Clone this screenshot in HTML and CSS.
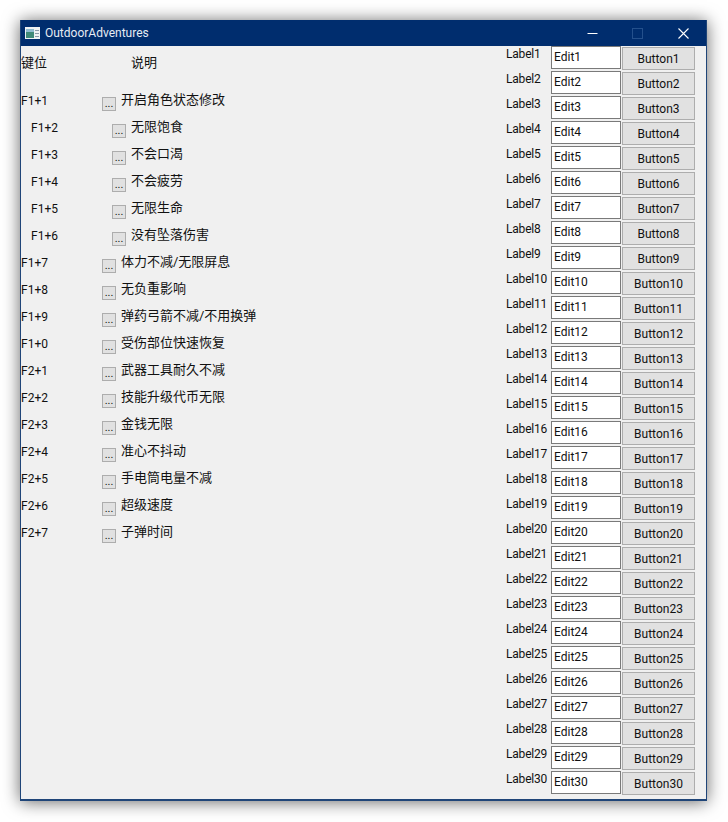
FILE: index.html
```html
<!DOCTYPE html>
<html lang="zh-CN">

<head>
    <meta charset="UTF-8">
    <title>OutdoorAdventures</title>
    <link rel="stylesheet" href="styles.css">
</head>

<body>
    <div class="window">
        <div class="titlebar">
            <svg class="app-icon" width="15" height="12" viewBox="0 0 15 12">
                <rect x="0" y="0" width="15" height="12" fill="#eef2f4" />
                <rect x="1" y="2" width="8" height="9" fill="#3f8a78" />
                <rect x="1" y="2" width="8" height="3" fill="#8fbcd0" />
                <rect x="10" y="3" width="4" height="1" fill="#8a9aa8" />
                <rect x="10" y="6" width="4" height="1" fill="#8a9aa8" />
                <rect x="10" y="9" width="4" height="1" fill="#8a9aa8" />
            </svg>
            <span class="title">OutdoorAdventures</span>
            <div class="controls">
                <svg class="ctl ctl-min" width="11" height="11" viewBox="0 0 11 11">
                    <path d="M0.5 5.5H10.5" stroke="#fff" stroke-width="1" fill="none" />
                </svg>
                <svg class="ctl ctl-max" width="11" height="11" viewBox="0 0 11 11">
                    <rect x="0.5" y="0.5" width="10" height="10" stroke="#24508c" fill="none" />
                </svg>
                <svg class="ctl ctl-close" width="11" height="11" viewBox="0 0 11 11">
                    <path d="M0.5 0.5L10.5 10.5M10.5 0.5L0.5 10.5" stroke="#fff" stroke-width="1.1" fill="none" />
                </svg>
            </div>
        </div>

        <div class="content">
            <div class="hotkeys">
                <div class="head">
                    <span class="key">键位</span>
                    <span class="head-desc">说明</span>
                </div>
                <div class="row"><span class="key">F1+1</span><button class="dots">...</button><span class="desc">开启角色状态修改</span></div>
                <div class="row sub"><span class="key">F1+2</span><button class="dots">...</button><span class="desc">无限饱食</span></div>
                <div class="row sub"><span class="key">F1+3</span><button class="dots">...</button><span class="desc">不会口渴</span></div>
                <div class="row sub"><span class="key">F1+4</span><button class="dots">...</button><span class="desc">不会疲劳</span></div>
                <div class="row sub"><span class="key">F1+5</span><button class="dots">...</button><span class="desc">无限生命</span></div>
                <div class="row sub"><span class="key">F1+6</span><button class="dots">...</button><span class="desc">没有坠落伤害</span></div>
                <div class="row"><span class="key">F1+7</span><button class="dots">...</button><span class="desc">体力不减/无限屏息</span></div>
                <div class="row"><span class="key">F1+8</span><button class="dots">...</button><span class="desc">无负重影响</span></div>
                <div class="row"><span class="key">F1+9</span><button class="dots">...</button><span class="desc">弹药弓箭不减/不用换弹</span></div>
                <div class="row"><span class="key">F1+0</span><button class="dots">...</button><span class="desc">受伤部位快速恢复</span></div>
                <div class="row"><span class="key">F2+1</span><button class="dots">...</button><span class="desc">武器工具耐久不减</span></div>
                <div class="row"><span class="key">F2+2</span><button class="dots">...</button><span class="desc">技能升级代币无限</span></div>
                <div class="row"><span class="key">F2+3</span><button class="dots">...</button><span class="desc">金钱无限</span></div>
                <div class="row"><span class="key">F2+4</span><button class="dots">...</button><span class="desc">准心不抖动</span></div>
                <div class="row"><span class="key">F2+5</span><button class="dots">...</button><span class="desc">手电筒电量不减</span></div>
                <div class="row"><span class="key">F2+6</span><button class="dots">...</button><span class="desc">超级速度</span></div>
                <div class="row"><span class="key">F2+7</span><button class="dots">...</button><span class="desc">子弹时间</span></div>
            </div>

            <div class="fields">
                <div class="field"><span class="lbl">Label1</span><input class="edit" value="Edit1"><button class="btn">Button1</button></div>
                <div class="field"><span class="lbl">Label2</span><input class="edit" value="Edit2"><button class="btn">Button2</button></div>
                <div class="field"><span class="lbl">Label3</span><input class="edit" value="Edit3"><button class="btn">Button3</button></div>
                <div class="field"><span class="lbl">Label4</span><input class="edit" value="Edit4"><button class="btn">Button4</button></div>
                <div class="field"><span class="lbl">Label5</span><input class="edit" value="Edit5"><button class="btn">Button5</button></div>
                <div class="field"><span class="lbl">Label6</span><input class="edit" value="Edit6"><button class="btn">Button6</button></div>
                <div class="field"><span class="lbl">Label7</span><input class="edit" value="Edit7"><button class="btn">Button7</button></div>
                <div class="field"><span class="lbl">Label8</span><input class="edit" value="Edit8"><button class="btn">Button8</button></div>
                <div class="field"><span class="lbl">Label9</span><input class="edit" value="Edit9"><button class="btn">Button9</button></div>
                <div class="field"><span class="lbl">Label10</span><input class="edit" value="Edit10"><button class="btn">Button10</button></div>
                <div class="field"><span class="lbl">Label11</span><input class="edit" value="Edit11"><button class="btn">Button11</button></div>
                <div class="field"><span class="lbl">Label12</span><input class="edit" value="Edit12"><button class="btn">Button12</button></div>
                <div class="field"><span class="lbl">Label13</span><input class="edit" value="Edit13"><button class="btn">Button13</button></div>
                <div class="field"><span class="lbl">Label14</span><input class="edit" value="Edit14"><button class="btn">Button14</button></div>
                <div class="field"><span class="lbl">Label15</span><input class="edit" value="Edit15"><button class="btn">Button15</button></div>
                <div class="field"><span class="lbl">Label16</span><input class="edit" value="Edit16"><button class="btn">Button16</button></div>
                <div class="field"><span class="lbl">Label17</span><input class="edit" value="Edit17"><button class="btn">Button17</button></div>
                <div class="field"><span class="lbl">Label18</span><input class="edit" value="Edit18"><button class="btn">Button18</button></div>
                <div class="field"><span class="lbl">Label19</span><input class="edit" value="Edit19"><button class="btn">Button19</button></div>
                <div class="field"><span class="lbl">Label20</span><input class="edit" value="Edit20"><button class="btn">Button20</button></div>
                <div class="field"><span class="lbl">Label21</span><input class="edit" value="Edit21"><button class="btn">Button21</button></div>
                <div class="field"><span class="lbl">Label22</span><input class="edit" value="Edit22"><button class="btn">Button22</button></div>
                <div class="field"><span class="lbl">Label23</span><input class="edit" value="Edit23"><button class="btn">Button23</button></div>
                <div class="field"><span class="lbl">Label24</span><input class="edit" value="Edit24"><button class="btn">Button24</button></div>
                <div class="field"><span class="lbl">Label25</span><input class="edit" value="Edit25"><button class="btn">Button25</button></div>
                <div class="field"><span class="lbl">Label26</span><input class="edit" value="Edit26"><button class="btn">Button26</button></div>
                <div class="field"><span class="lbl">Label27</span><input class="edit" value="Edit27"><button class="btn">Button27</button></div>
                <div class="field"><span class="lbl">Label28</span><input class="edit" value="Edit28"><button class="btn">Button28</button></div>
                <div class="field"><span class="lbl">Label29</span><input class="edit" value="Edit29"><button class="btn">Button29</button></div>
                <div class="field"><span class="lbl">Label30</span><input class="edit" value="Edit30"><button class="btn">Button30</button></div>
            </div>
        </div>
    </div>
</body>

</html>
```

FILE: styles.css
```css
* {
    box-sizing: border-box;
    padding: 0;
    margin: 0;
}

body {
    padding: 20px 21px 21px 20px;
    background: #ffffff;
    font-family: Roboto, "Noto Sans CJK SC", sans-serif;
    font-size: 12px;
    color: #111111;
    overflow: hidden;
}

.window {
    display: flex;
    flex-direction: column;
    width: 687px;
    height: 781px;
    border: 1px solid #1f4578;
    border-width: 0 1px 2px 1px;
    background: #f0f0f0;
    box-shadow: 0 1px 16px rgba(0, 0, 0, 0.6);
}

.titlebar {
    display: flex;
    align-items: center;
    height: 26px;
    flex: none;
    padding-left: 4px;
    background: #002d6e;
    color: #e6ecf4;
}

.app-icon {
    margin-right: 5px;
}

.title {
    flex: 1;
    font-size: 12px;
}

.controls {
    display: flex;
    align-items: center;
}

.ctl-min {
    margin-right: 34px;
}

.ctl-max {
    margin-right: 35px;
}

.ctl-close {
    margin-right: 17px;
}

.content {
    display: flex;
    flex: 1;
}

.hotkeys {
    flex: 1;
}

.head {
    display: flex;
    height: 42px;
    font-size: 13px;
    line-height: 33px;
}

.head .key {
    font-size: 13px;
    line-height: 33px;
}

.head-desc {
    margin-left: 29px;
}

.row {
    display: flex;
    align-items: flex-start;
    height: 27px;
}

.key {
    width: 81px;
    font-size: 12px;
    line-height: 26px;
}

.dots {
    width: 14px;
    height: 14px;
    margin-top: 9px;
    margin-right: 5px;
    border: 1px solid #adadad;
    background: #e1e1e1;
    font-family: inherit;
    font-size: 11px;
    line-height: 12px;
    color: #111111;
}

.desc {
    font-size: 13px;
    line-height: 24px;
}

.sub .key {
    padding-left: 10px;
    width: 91px;
}

.fields {
    flex: none;
    width: 200px;
    padding-right: 11px;
}

.field {
    display: flex;
    align-items: flex-start;
    height: 25px;
}

.lbl {
    width: 45px;
    font-size: 12px;
    letter-spacing: -0.2px;
    line-height: 16px;
}

.edit {
    width: 70px;
    height: 23px;
    margin-right: 1px;
    padding: 0 2px 2px;
    border: 1px solid #7a7a7a;
    background: #ffffff;
    font-family: inherit;
    font-size: 12px;
    color: #111111;
}

.btn {
    width: 73px;
    height: 23px;
    margin-top: 1px;
    border: 1px solid #adadad;
    background: #e1e1e1;
    font-family: inherit;
    font-size: 12px;
    color: #111111;
}
```
